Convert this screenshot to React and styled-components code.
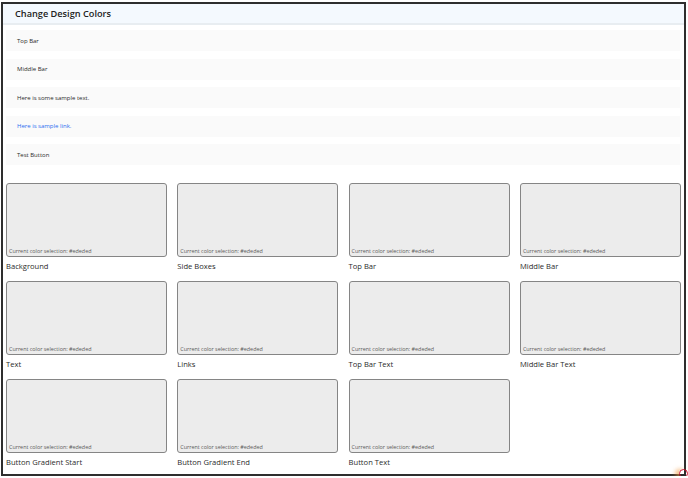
import styled, { createGlobalStyle } from 'styled-components';

const GlobalStyle = createGlobalStyle`
  html, body {
    margin: 0;
    padding: 0;
    background: #fff;
    font-family: "Open Sans", "Noto Sans", sans-serif;
  }
`;

const FrameStyled = styled.div`
  position: relative;
  box-sizing: border-box;
  width: 685px;
  height: 474px;
  margin: 2px 0 0 1px;
  border: 2px solid #2e2e2e;
  display: flex;
  flex-direction: column;
`;

const HeaderStyled = styled.div`
  height: 19px;
  display: flex;
  align-items: center;
  padding-left: 12px;
  background: #f4f9fe;
  border-bottom: 2px solid #e8edf1;
  font-size: 9.2px;
  font-weight: 600;
  color: #222;
`;

const BodyStyled = styled.div`
  padding: 5px 4px 0 3px;
  display: flex;
  flex-direction: column;
`;

const SampleListStyled = styled.div`
  display: flex;
  flex-direction: column;
  gap: 7.5px;
`;

const SampleRowStyled = styled.div`
  height: 21px;
  display: flex;
  align-items: center;
  padding-left: 11px;
  background: #fafafa;
  font-size: 6px;
  color: ${(p) => (p.$link ? '#2b6ef0' : '#2a2a2a')};
`;

const GridStyled = styled.div`
  margin-top: 18px;
  display: grid;
  grid-template-columns: repeat(4, 161px);
  column-gap: 10.3px;
  row-gap: 8px;
`;

const CardStyled = styled.div`
  display: flex;
  flex-direction: column;
`;

const SwatchStyled = styled.div`
  box-sizing: border-box;
  height: 74px;
  background: #ececec;
  border: 1px solid #858585;
  border-radius: 3px;
  display: flex;
  align-items: flex-end;
  padding: 0 0 1px 2px;
  font-size: 5.4px;
  color: #5a5a5a;
`;

const LabelStyled = styled.div`
  height: 14px;
  margin-top: 2px;
  display: flex;
  align-items: center;
  font-size: 7.6px;
  font-weight: 500;
  color: #2b2b2b;
`;

const CornerDotStyled = styled.div`
  position: absolute;
  right: -4px;
  bottom: -4px;
  width: 7px;
  height: 7px;
  border-radius: 50%;
  border: 1.5px solid #c8102e;
  box-shadow: -4px 0 4px rgba(240, 150, 60, 0.6);
`;

const samples = [
  { text: 'Top Bar' },
  { text: 'Middle Bar' },
  { text: 'Here is some sample text.' },
  { text: 'Here is sample link.', link: true },
  { text: 'Test Button' },
];

const cards = [
  'Background',
  'Side Boxes',
  'Top Bar',
  'Middle Bar',
  'Text',
  'Links',
  'Top Bar Text',
  'Middle Bar Text',
  'Button Gradient Start',
  'Button Gradient End',
  'Button Text',
];

const ColorCard = ({ label, color }) => (
  <CardStyled>
    <SwatchStyled>Current color selection: {color}</SwatchStyled>
    <LabelStyled>{label}</LabelStyled>
  </CardStyled>
);

const App = () => {
  return (
    <>
      <GlobalStyle />
      <FrameStyled>
        <HeaderStyled>Change Design Colors</HeaderStyled>
        <BodyStyled>
          <SampleListStyled>
            {samples.map((s) => (
              <SampleRowStyled key={s.text} $link={s.link}>
                {s.text}
              </SampleRowStyled>
            ))}
          </SampleListStyled>
          <GridStyled>
            {cards.map((c) => (
              <ColorCard key={c} label={c} color='#ededed' />
            ))}
          </GridStyled>
        </BodyStyled>
        <CornerDotStyled />
      </FrameStyled>
    </>
  );
};

export default App;
